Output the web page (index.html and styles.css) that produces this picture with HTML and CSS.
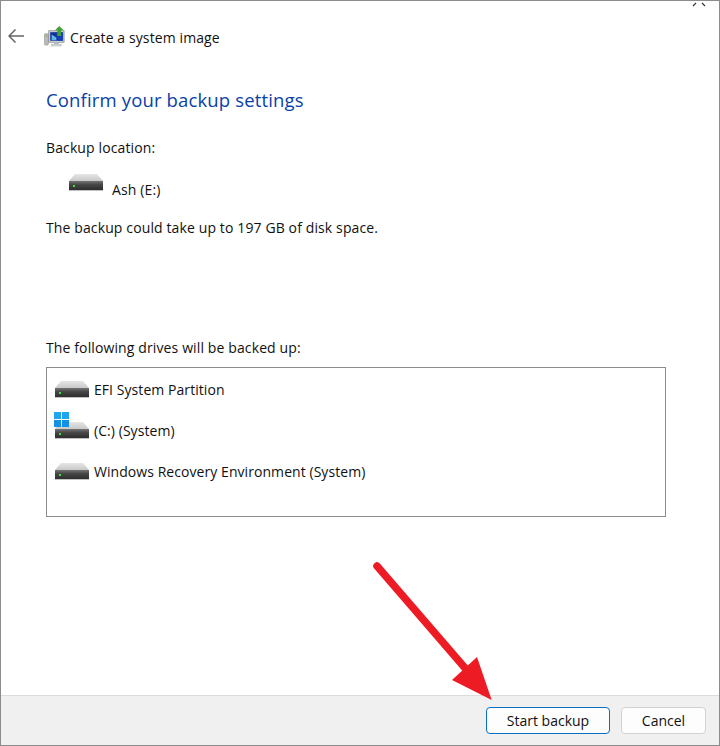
FILE: index.html
```html
<!DOCTYPE html>
<html lang="en">
<head>
<meta charset="utf-8">
<title>Create a system image</title>
<link rel="stylesheet" href="styles.css">
</head>
<body>
<svg class="defs" width="0" height="0" aria-hidden="true">
  <defs>
    <linearGradient id="driveTop" x1="0" y1="0" x2="0" y2="1">
      <stop offset="0" stop-color="#e6e6e6"/><stop offset="1" stop-color="#c8c8c8"/>
    </linearGradient>
    <linearGradient id="driveFace" x1="0" y1="0" x2="0" y2="1">
      <stop offset="0" stop-color="#757575"/><stop offset=".4" stop-color="#474747"/><stop offset="1" stop-color="#2e2e2e"/>
    </linearGradient>
    <symbol id="drive" viewBox="0 0 34 17" preserveAspectRatio="none">
      <path d="M6 0H28L34 7H0Z" fill="url(#driveTop)"/>
      <rect x="0" y="7" width="34" height="9" fill="url(#driveFace)"/>
      <rect x="0" y="16" width="34" height="1" fill="#c2c2c2"/>
      <rect x="4" y="11" width="2" height="2" fill="#3ee03e"/>
    </symbol>
  </defs>
</svg>
<div class="window">
  <svg class="close-hint" width="14" height="6" viewBox="0 0 14 6" aria-hidden="true">
    <path d="M1 5L4 2M13 5L10 2" stroke="#333" stroke-width="1.200" fill="none"/>
  </svg>
  <header class="titlebar">
    <svg class="back" width="16" height="14" viewBox="0 0 16 14" aria-hidden="true">
      <path d="M7.500 .5L1 7L7.500 13.500M1 7H16" stroke="#666" stroke-width="1.500" fill="none"/>
    </svg>
    <svg class="app-icon" width="21" height="21" viewBox="0 0 22 22" aria-hidden="true">
      <rect x="0.500" y="8" width="4" height="12" rx="1" fill="#b9bdb4" stroke="#8d918a" stroke-width=".6"/>
      <rect x="1.500" y="10" width="2" height="1" fill="#6fae4e"/>
      <rect x="5" y="5" width="16" height="12" fill="#d5d8d8" stroke="#7c8280" stroke-width=".8"/>
      <rect x="6.500" y="6.500" width="13" height="9" fill="#10309a"/>
      <path d="M8 15V9L13 12V15Z" fill="#5fb3e8"/>
      <path d="M12 6.500H20V15.500H15Z" fill="#1a3fb0"/>
      <rect x="10.500" y="17" width="5" height="2" fill="#b5b8b8"/>
      <rect x="8" y="19" width="10" height="2" fill="#d9dbdb" stroke="#9a9d9d" stroke-width=".4"/>
      <path d="M16 0L20.500 4.500H18V10.500H14V4.500H11.500Z" fill="#3fa33a"/>
    </svg>
    <span class="title">Create a system image</span>
  </header>
  <main class="content">
    <h1 class="heading">Confirm your backup settings</h1>
    <p class="label">Backup location:</p>
    <div class="location">
      <svg class="drive"><use href="#drive"/></svg>
      <span class="location-name">Ash (E:)</span>
    </div>
    <p class="label size-note">The backup could take up to 197 GB of disk space.</p>
    <p class="label drives-label">The following drives will be backed up:</p>
    <ul class="drive-list">
      <li class="drive-row"><svg class="drive"><use href="#drive"/></svg><span>EFI System Partition</span></li>
      <li class="drive-row">
        <span class="drive-wrap">
          <svg class="drive"><use href="#drive"/></svg>
          <svg class="win-logo" width="15" height="15" viewBox="0 0 15 15" aria-hidden="true">
            <rect width="7" height="7" fill="#1fa6ee"/><rect x="8" width="7" height="7" fill="#1fa6ee"/>
            <rect y="8" width="7" height="7" fill="#1391e2"/><rect x="8" y="8" width="7" height="7" fill="#1391e2"/>
          </svg>
        </span>
        <span>(C:) (System)</span>
      </li>
      <li class="drive-row"><svg class="drive"><use href="#drive"/></svg><span>Windows Recovery Environment (System)</span></li>
    </ul>
  </main>
  <footer class="footer">
    <button class="btn btn-primary" type="button">Start backup</button>
    <button class="btn btn-cancel" type="button">Cancel</button>
  </footer>
  <svg class="annotation" width="130" height="150" viewBox="0 0 130 150" aria-hidden="true">
    <path d="M4 6L92 108" stroke="#ed1c24" stroke-width="7.500" stroke-linecap="round" fill="none"/>
    <path d="M118.700 140L104 97L79 120Z" fill="#ed1c24"/>
  </svg>
</div>
</body>
</html>
```
FILE: styles.css
```css
* { box-sizing: border-box; }
html, body { margin: 0; padding: 0; }
body {
  width: 720px;
  height: 746px;
  overflow: hidden;
  background: #fff;
  font-family: "Open Sans", "Noto Sans", sans-serif;
  font-size: 14px;
  letter-spacing: .12px;
  color: #111;
}
.defs { position: absolute; }
.window {
  position: relative;
  width: 720px;
  height: 746px;
  display: flex;
  flex-direction: column;
  border: 1px solid #8c8c8c;
  background: #fff;
  overflow: hidden;
}
.close-hint { position: absolute; top: 0; right: 13px; }
.titlebar {
  display: flex;
  align-items: center;
  height: 48px;
  padding: 24px 0 0 7px;
  flex: none;
}
.back { flex: none; margin-bottom: 2px; }
.app-icon { flex: none; margin: 0 5px 1px 20px; }
.title { font-size: 14px; letter-spacing: .1px; }
.content {
  flex: 1;
  padding: 0 53px 0 45px;
  min-height: 0;
}
.heading {
  margin: 38px 0 0;
  font-size: 18.500px;
  line-height: 26px;
  font-weight: 400;
  color: #0a3fa8;
  letter-spacing: .15px;
}
.label { margin: 0; line-height: 20px; }
.heading + .label { margin-top: 25px; }
.location {
  display: flex;
  align-items: flex-end;
  gap: 9px;
  margin: 15px 0 0 23px;
  height: 26px;
}
.location-name { line-height: 19px; }
.drive { display: block; width: 34px; height: 17px; flex: none; }
.location .drive { margin-bottom: 8px; }
.size-note { margin-top: 19px; }
.drives-label { margin-top: 100px; }
.drive-list {
  list-style: none;
  margin: 9px 0 0;
  padding: 1px 0 0 8px;
  height: 150px;
  border: 1px solid #8c8c8c;
  display: flex;
  flex-direction: column;
  letter-spacing: .06px;
}
.drive-row {
  display: flex;
  align-items: center;
  gap: 5px;
  height: 41px;
  line-height: 20px;
}
.drive-wrap { position: relative; display: block; width: 34px; height: 17px; }
.win-logo { position: absolute; left: -1px; top: -10px; }
.footer {
  flex: none;
  height: 50px;
  display: flex;
  justify-content: flex-end;
  align-items: center;
  gap: 11px;
  padding: 0 13px 0 0;
  background: #f0f0f0;
  border-top: 1px solid #dcdcdc;
}
.btn {
  height: 27px;
  border-radius: 4px;
  background: #fdfdfd;
  font: inherit;
  font-size: 14px;
  color: #111;
  padding: 0;
}
.btn-primary { width: 124px; border: 1px solid #0b6fc0; }
.btn-cancel { width: 85px; border: 1px solid #d2d2d2; }
.annotation { position: absolute; left: 372px; top: 559px; }
```
